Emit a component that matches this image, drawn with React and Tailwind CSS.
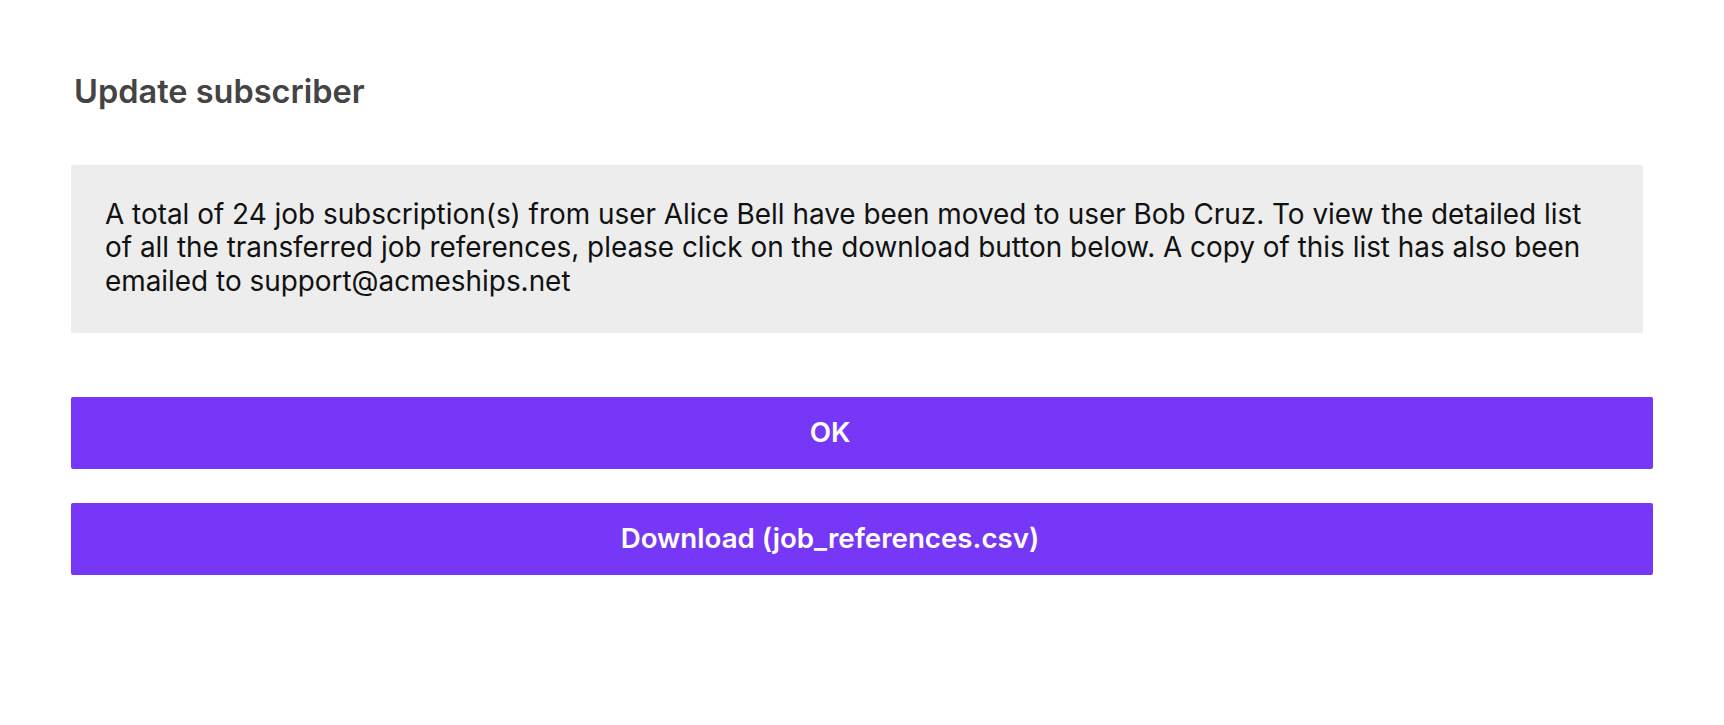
export default function App() {
  return (
    <div className="min-h-[725px] w-full bg-white font-['Inter','Noto_Sans',sans-serif]">
      <div className="px-[71px] pt-[72px]">
        <h1 className="pl-[3px] text-[32.5px] font-semibold leading-[40px] text-[#444444]">Update subscriber</h1>
        <div className="mt-[53px] mr-[10px] rounded-[2px] bg-[#ededed] pl-[34px] pr-[43px] pt-[32.5px] pb-[34.5px]">
          <p className="text-[27.9px] leading-[33.6px] text-[#111111]">
            A total of 24 job subscription(s) from user Alice Bell have been moved to user Bob Cruz. To view the detailed list of all the transferred job references, please click on the download button below. A copy of this list has also been emailed to support@acmeships.net
          </p>
        </div>
        <div className="mt-[64px] flex flex-col gap-[34px]">
          <button className="flex h-[72px] w-full items-center justify-center rounded-[2px] bg-[#7638f6] pr-[64px] text-[27.7px] font-semibold text-white">
            OK
          </button>
          <button className="flex h-[72px] w-full items-center justify-center rounded-[2px] bg-[#7638f6] pr-[64px] text-[27.7px] font-semibold text-white">
            Download (job_references.csv)
          </button>
        </div>
      </div>
    </div>
  );
}
